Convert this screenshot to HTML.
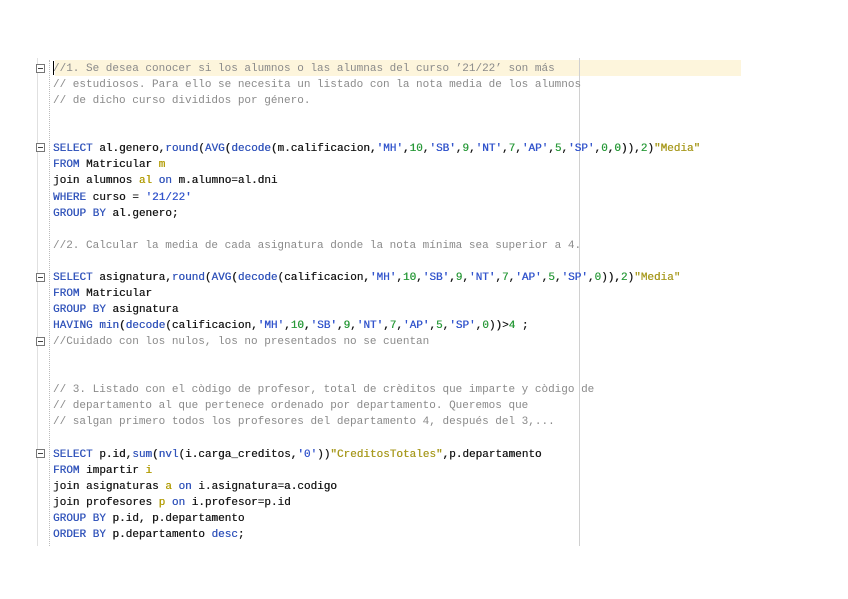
<html><head><style>
body{margin:0;background:#fff;width:848px;height:599px;position:relative;overflow:hidden}
.hl{position:absolute;left:55px;top:60px;width:686px;height:16px;background:#fdf5dc}
.vl{position:absolute;left:579px;top:58px;width:1px;height:488px;background:#d0d0d0}
.lb{position:absolute;left:37px;top:58px;width:1px;height:488px;background:#e0e0e0}
.dot{position:absolute;left:49px;top:60px;height:486px;border-left:1px dotted #bbb}
pre{position:absolute;left:53px;top:61px;margin:0;font-family:"Liberation Mono",monospace;font-size:11px;line-height:16.07px;color:#1a1a1a;text-shadow:0.3px 0 0 currentColor}
.c{color:#8a8a8a;text-shadow:none}.k{color:#3355bb}.s{color:#3355cc}.n{color:#2a9a3a}.a{color:#b09a00}.q{color:#a89a20}
.f{position:absolute;left:36px;width:7px;height:7px;border:1px solid #777;background:#fff;font-size:0}
.f:after{content:"";position:absolute;left:1px;top:3px;width:5px;height:1px;background:#444}
.cur{position:absolute;left:53px;top:61px;width:1px;height:14px;background:#000}
</style></head><body>
<div class="hl"></div><div class="lb"></div><div class="dot"></div><div class="vl"></div>
<div class="f" style="top:64px"></div><div class="f" style="top:143px"></div><div class="f" style="top:273px"></div><div class="f" style="top:337px"></div><div class="f" style="top:449px"></div>
<pre><span class="c">//1. Se desea conocer si los alumnos o las alumnas del curso ’21/22’ son más
// estudiosos. Para ello se necesita un listado con la nota media de los alumnos
// de dicho curso divididos por género.</span>


<span class="k">SELECT</span> al.genero,<span class="k">round</span>(<span class="k">AVG</span>(<span class="k">decode</span>(m.calificacion,<span class="s">'MH'</span>,<span class="n">10</span>,<span class="s">'SB'</span>,<span class="n">9</span>,<span class="s">'NT'</span>,<span class="n">7</span>,<span class="s">'AP'</span>,<span class="n">5</span>,<span class="s">'SP'</span>,<span class="n">0</span>,<span class="n">0</span>)),<span class="n">2</span>)<span class="q">"Media"</span>
<span class="k">FROM</span> Matricular <span class="a">m</span>
join alumnos <span class="a">al</span> <span class="k">on</span> m.alumno=al.dni
<span class="k">WHERE</span> curso = <span class="s">'21/22'</span>
<span class="k">GROUP BY</span> al.genero;

<span class="c">//2. Calcular la media de cada asignatura donde la nota mínima sea superior a 4.</span>

<span class="k">SELECT</span> asignatura,<span class="k">round</span>(<span class="k">AVG</span>(<span class="k">decode</span>(calificacion,<span class="s">'MH'</span>,<span class="n">10</span>,<span class="s">'SB'</span>,<span class="n">9</span>,<span class="s">'NT'</span>,<span class="n">7</span>,<span class="s">'AP'</span>,<span class="n">5</span>,<span class="s">'SP'</span>,<span class="n">0</span>)),<span class="n">2</span>)<span class="q">"Media"</span>
<span class="k">FROM</span> Matricular
<span class="k">GROUP BY</span> asignatura
<span class="k">HAVING</span> <span class="k">min</span>(<span class="k">decode</span>(calificacion,<span class="s">'MH'</span>,<span class="n">10</span>,<span class="s">'SB'</span>,<span class="n">9</span>,<span class="s">'NT'</span>,<span class="n">7</span>,<span class="s">'AP'</span>,<span class="n">5</span>,<span class="s">'SP'</span>,<span class="n">0</span>))&gt;<span class="n">4</span> ;
<span class="c">//Cuidado con los nulos, los no presentados no se cuentan</span>


<span class="c">// 3. Listado con el còdigo de profesor, total de crèditos que imparte y còdigo de
// departamento al que pertenece ordenado por departamento. Queremos que
// salgan primero todos los profesores del departamento 4, después del 3,...</span>

<span class="k">SELECT</span> p.id,<span class="k">sum</span>(<span class="k">nvl</span>(i.carga_creditos,<span class="s">'0'</span>))<span class="q">"CreditosTotales"</span>,p.departamento
<span class="k">FROM</span> impartir <span class="a">i</span>
join asignaturas <span class="a">a</span> <span class="k">on</span> i.asignatura=a.codigo
join profesores <span class="a">p</span> <span class="k">on</span> i.profesor=p.id
<span class="k">GROUP BY</span> p.id, p.departamento
<span class="k">ORDER BY</span> p.departamento <span class="k">desc</span>;</pre>
<div class="cur"></div>
</body></html>
